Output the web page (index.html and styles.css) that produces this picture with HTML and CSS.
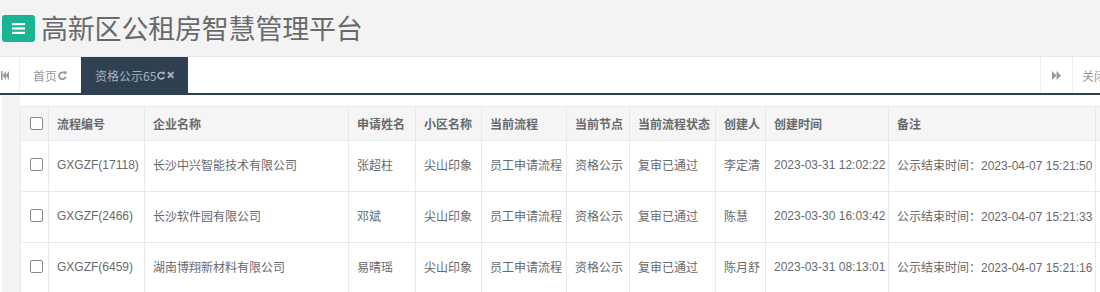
FILE: index.html
```html
<!DOCTYPE html>
<html lang="zh">
<head>
<meta charset="utf-8">
<link rel="stylesheet" href="styles.css">
</head>
<body>
<header class="topbar">
  <span class="menu-btn">
    <svg width="13" height="11" viewBox="0 0 13 11"><rect x="0" y="0" width="13" height="2.2" fill="#fff"/><rect x="0" y="4.4" width="13" height="2.2" fill="#fff"/><rect x="0" y="8.8" width="13" height="2.2" fill="#fff"/></svg>
  </span>
  <h1 class="title">高新区公租房智慧管理平台</h1>
</header>
<nav class="tabs">
  <span class="tab-arrow left">
    <svg width="8" height="9" viewBox="0 0 8 9"><rect x="0" y="0" width="1.6" height="9" fill="#999"/><polygon points="1.6,4.5 5,0 5,9" fill="#999"/><polygon points="4.6,4.5 8,0 8,9" fill="#999"/></svg>
  </span>
  <span class="tab">首页<svg class="ico" width="9" height="9" viewBox="0 0 10 10"><path d="M8.2 3.2A3.8 3.8 0 1 0 8.6 6.4" fill="none" stroke="#999" stroke-width="2"/><polygon points="6.2,0.6 9.6,0.4 9.4,4" fill="#999"/></svg></span>
  <span class="tab active">资格公示65<svg class="ico" width="9" height="9" viewBox="0 0 10 10"><path d="M8.2 3.2A3.8 3.8 0 1 0 8.6 6.4" fill="none" stroke="#a7b1c2" stroke-width="2"/><polygon points="6.2,0.6 9.6,0.4 9.4,4" fill="#a7b1c2"/></svg><svg class="ico close" width="8" height="8" viewBox="0 0 8 8"><path d="M1 1L7 7M7 1L1 7" stroke="#a7b1c2" stroke-width="2.2"/></svg></span>
  <span class="tabs-fill"></span>
  <span class="tab-arrow right">
    <svg width="9" height="9" viewBox="0 0 9 9"><polygon points="0,0 4.5,4.5 0,9" fill="#999"/><polygon points="4.5,0 9,4.5 4.5,9" fill="#999"/></svg>
  </span>
  <span class="tab-close">关闭</span>
</nav>
<main class="content">
  <div class="gutter"></div>
  <div class="panel">
    <table class="grid">
      <colgroup>
        <col style="width:28px"><col style="width:96px"><col style="width:204px"><col style="width:67px"><col style="width:66px"><col style="width:85px"><col style="width:63px"><col style="width:86px"><col style="width:50px"><col style="width:123px"><col style="width:207px"><col style="width:80px">
      </colgroup>
      <thead>
        <tr>
          <th class="c-chk"><span class="chk"></span></th>
          <th>流程编号</th><th>企业名称</th><th>申请姓名</th><th>小区名称</th><th>当前流程</th><th class="center">当前节点</th><th>当前流程状态</th><th>创建人</th><th>创建时间</th><th>备注</th><th></th>
        </tr>
      </thead>
      <tbody>
        <tr>
          <td class="c-chk"><span class="chk"></span></td>
          <td>GXGZF(17118)</td><td>长沙中兴智能技术有限公司</td><td>张超柱</td><td>尖山印象</td><td>员工申请流程</td><td>资格公示</td><td>复审已通过</td><td>李定清</td><td>2023-03-31 12:02:22</td><td>公示结束时间：2023-04-07 15:21:50</td><td></td>
        </tr>
        <tr>
          <td class="c-chk"><span class="chk"></span></td>
          <td>GXGZF(2466)</td><td>长沙软件园有限公司</td><td>邓斌</td><td>尖山印象</td><td>员工申请流程</td><td>资格公示</td><td>复审已通过</td><td>陈慧</td><td>2023-03-30 16:03:42</td><td>公示结束时间：2023-04-07 15:21:33</td><td></td>
        </tr>
        <tr>
          <td class="c-chk"><span class="chk"></span></td>
          <td>GXGZF(6459)</td><td>湖南博翔新材料有限公司</td><td>易晴瑶</td><td>尖山印象</td><td>员工申请流程</td><td>资格公示</td><td>复审已通过</td><td>陈月舒</td><td>2023-03-31 08:13:01</td><td>公示结束时间：2023-04-07 15:21:16</td><td></td>
        </tr>
      </tbody>
    </table>
  </div>
</main>
</body>
</html>
```

FILE: styles.css
```css
* { box-sizing: border-box; }
html, body {
  margin: 0;
  padding: 0;
  width: 1100px;
  height: 292px;
  overflow: hidden;
  background: #fff;
  font-family: "Liberation Sans", "Noto Sans CJK SC", sans-serif;
  color: #676a6c;
}
.topbar {
  height: 57px;
  background: #f3f3f4;
  display: flex;
  align-items: center;
  padding-left: 2px;
  border-bottom: 1px solid #e7eaec;
}
.menu-btn {
  width: 33px;
  height: 27px;
  margin-top: 1px;
  background: #1ab394;
  border-radius: 3px;
  display: flex;
  align-items: center;
  justify-content: center;
}
.title {
  margin: 0 0 0 6px;
  font-family: "Noto Sans CJK SC", sans-serif;
  font-weight: 400;
  font-size: 27px;
  line-height: 30px;
  color: #676a6c;
  letter-spacing: -0.2px;
}
.tabs {
  height: 38px;
  display: flex;
  background: #fff;
  border-bottom: 2px solid #2f4050;
  font-size: 12px;
  font-family: "Noto Sans CJK SC", sans-serif;
}
.tab-arrow {
  display: flex;
  align-items: center;
  justify-content: center;
  background: #fff;
}
.tab-arrow.left {
  width: 20px;
  border-right: 1px solid #eee;
  justify-content: flex-start;
  padding-left: 1px;
}
.tab-arrow.right {
  width: 33px;
  border-left: 1px solid #eee;
  border-right: 1px solid #eee;
}
.tab {
  display: flex;
  align-items: center;
  padding: 0 14px 0 13px;
  color: #999;
  white-space: nowrap;
}
.tab .ico { margin-left: 1px; }
.tab .close { margin-left: 1px; }
.tab.active {
  background: #2f4050;
  color: #a7b1c2;
  padding: 0 14px 0 14px;
  width: 107px;
}
.tabs-fill { flex: 1; }
.tab-close {
  width: 27px;
  overflow: hidden;
  white-space: nowrap;
  padding-left: 9px;
  display: flex;
  align-items: center;
  color: #999;
}
.content {
  display: flex;
  height: 197px;
}
.gutter {
  width: 18px;
  margin-left: 2px;
  background: #f3f3f4;
  flex: none;
}
.panel {
  flex: 1;
  overflow: hidden;
  padding-top: 11px;
  background: #fff;
}
.grid {
  border-collapse: collapse;
  table-layout: fixed;
  width: 1155px;
  font-size: 12px;
  color: #676a6c;
}
.grid th, .grid td {
  border: 1px solid #e7eaec;
  padding: 0 8px;
  text-align: left;
  white-space: nowrap;
  overflow: hidden;
}
.grid th {
  background: #f5f5f6;
  height: 34px;
  font-weight: 700;
  font-family: "Noto Sans CJK SC", sans-serif;
}
.grid td {
  height: 51px;
  padding-bottom: 3px;
  font-family: "Liberation Sans", "Noto Sans CJK SC", sans-serif;
}
.grid th.center { text-align: center; }
.grid .c-chk {
  padding: 0 0 0 9px;
}
.chk {
  display: block;
  width: 13px;
  height: 13px;
  border: 1px solid #8a8a8a;
  border-radius: 2px;
  background: #fff;
}
.grid td.c-chk .chk { margin-top: -4px; }
```
